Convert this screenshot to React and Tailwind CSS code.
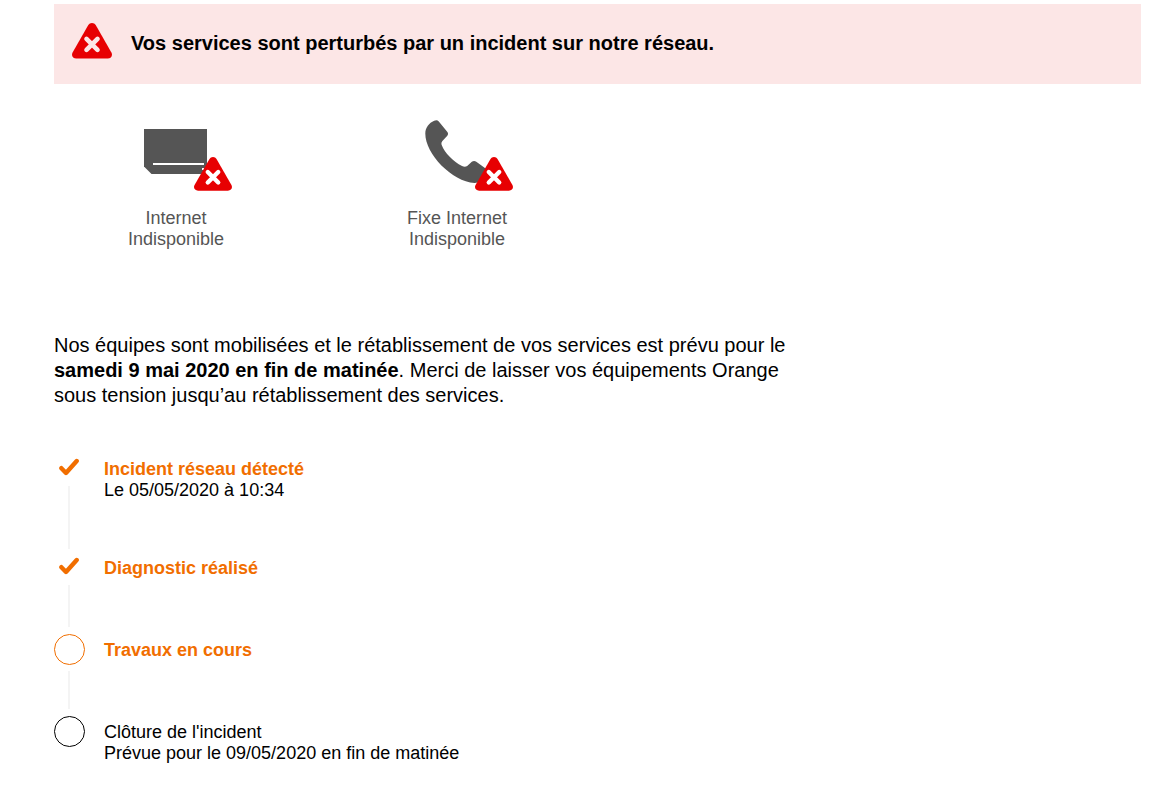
const services = [
  { name: "Internet", status: "Indisponible", Icon: BoxIcon },
  { name: "Fixe Internet", status: "Indisponible", Icon: PhoneIcon },
];

const steps = [
  { title: "Incident réseau détecté", detail: "Le 05/05/2020 à 10:34", state: "done" },
  { title: "Diagnostic réalisé", state: "done" },
  { title: "Travaux en cours", state: "current" },
  {
    title: "Clôture de l'incident",
    detail: "Prévue pour le 09/05/2020 en fin de matinée",
    state: "todo",
  },
];

// The cross takes the text colour so it can blend with its background
function AlertIcon({ className }) {
  return (
    <svg className={className} viewBox="0 0 40 36" aria-hidden="true">
      <path
        fill="#e70002"
        d="M16.3 2.1C17.1.8 18.4 0 20 0s2.9.8 3.7 2.1l15.7 27.4c1.6 3-.3 6-3.7 6H4.3c-3.4 0-5.3-3-3.7-6z"
      />
      <path
        d="M14.5 15.9l11 11M25.5 15.9l-11 11"
        stroke="currentColor"
        strokeWidth="4.6"
        strokeLinecap="round"
      />
    </svg>
  );
}

function BoxIcon() {
  return (
    <svg className="h-16 w-16" viewBox="0 0 64 64" aria-hidden="true">
      <path fill="#555" d="M0 9h63v45H7.5L0 46.5z" />
      <path fill="#fff" d="M9 43h51v2H9zM58 48h2v2h-2z" />
    </svg>
  );
}

function PhoneIcon() {
  return (
    <svg className="h-16 w-16" viewBox="0 0 64 64" aria-hidden="true">
      <path
        fill="#555"
        d="M9.2.8C10.9-.1 12.6.1 13.8 1.4L22.2 11.7C23.300 13 23.300 14.500 22.300 15.800L17.400 21C16.300 22.300 16.200 23.500 16.700 25C19.500 32.500 28.500 42 37 46C38.800 46.800 40.500 47 42.200 46L46.800 41.800C48.300 40.600 49.800 40.600 51.300 41.700L62 49.500C63 50.500 63.200 52.200 62.200 53.500C59 59.500 55 63 49.500 63C27 61.500.3 34 .3 13.500C.4 7.500 4 3 9.200.8z"
      />
    </svg>
  );
}

function StepMarker({ state }) {
  if (state === "done") {
    return (
      <div className="flex h-9 items-center justify-center">
        <svg className="h-5 w-5" viewBox="0 0 20 20" aria-hidden="true">
          <path
            d="M2.4 10.2l4.600 4.800L17.700 3"
            fill="none"
            stroke="#f16e00"
            strokeWidth="4.4"
            strokeLinecap="round"
            strokeLinejoin="round"
          />
        </svg>
      </div>
    );
  }

  return (
    <div className="flex h-11 items-center justify-center">
      <span
        className={`h-[31px] w-[31px] shrink-0 rounded-full border ${
          state === "current" ? "border-[#f16e00]" : "border-black"
        }`}
      />
    </div>
  );
}

function Step({ step, isLast }) {
  const active = step.state !== "todo";

  return (
    <li className="flex gap-5">
      <div className="flex w-[30px] shrink-0 flex-col">
        <StepMarker state={step.state} />
        {!isLast && <div className="w-[2px] flex-1 self-center bg-[#f4f4f4]" />}
      </div>
      <div
        className={`${step.state === "done" ? "pt-[9px]" : "pt-[13px]"} ${
          isLast ? "" : "pb-12"
        }`}
      >
        <p className={active ? "font-bold text-[#f16e00]" : ""}>{step.title}</p>
        {step.detail && <p>{step.detail}</p>}
      </div>
    </li>
  );
}

export default function App() {
  return (
    <main className="bg-white pt-1 pr-[22px] pb-8 pl-[54px] font-['Liberation_Sans',Arial,sans-serif] text-lg leading-[21px] text-black">
      {/* Alert banner */}
      <div
        role="alert"
        className="flex min-h-20 items-center gap-[19px] bg-[#fce6e6] px-[18px] pb-[2px]"
      >
        <AlertIcon className="mb-1 h-9 w-10 shrink-0 text-[#fce6e6]" />
        <h1 className="text-xl leading-[25px] font-bold">
          Vos services sont perturbés par un incident sur notre réseau.
        </h1>
      </div>

      {/* Impacted services */}
      <ul className="mt-9 flex flex-wrap gap-[37px]">
        {services.map(({ name, status, Icon }) => (
          <li
            key={name}
            className="flex w-[244px] flex-col items-center gap-6 text-center text-[#555]"
          >
            <div className="relative">
              <Icon />
              <AlertIcon className="absolute -right-6 -bottom-2 h-9 w-[38px] text-white" />
            </div>
            <div>
              <p>{name}</p>
              <p>{status}</p>
            </div>
          </li>
        ))}
      </ul>

      <p className="mt-[83px] max-w-[745px] text-xl leading-[25px]">
        Nos équipes sont mobilisées et le rétablissement de vos services est
        prévu pour le <strong>samedi 9 mai 2020 en fin de matinée</strong>. Merci
        de laisser vos équipements Orange sous tension jusqu’au rétablissement
        des services.
      </p>

      {/* Incident progress */}
      <ol className="mt-[42px]">
        {steps.map((step, index) => (
          <Step
            key={step.title}
            step={step}
            isLast={index === steps.length - 1}
          />
        ))}
      </ol>
    </main>
  );
}
